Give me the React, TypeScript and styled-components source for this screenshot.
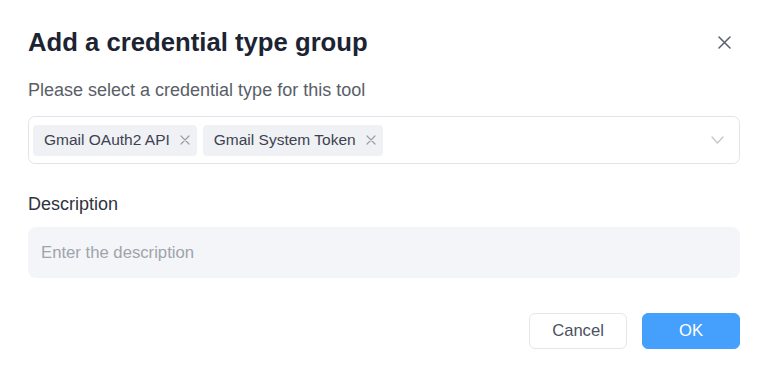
import React from 'react';
import styled, { createGlobalStyle } from 'styled-components';

const GlobalStyle = createGlobalStyle`
  html, body {
    margin: 0;
    padding: 0;
    background: #fff;
    font-family: "Liberation Sans", Arial, sans-serif;
  }
  * {
    box-sizing: border-box;
  }
`;

const Dialog = styled.div`
  width: 768px;
  height: 377px;
  padding: 22px 28px 0 28px;
  background: #fff;
  display: flex;
  flex-direction: column;
`;

const Header = styled.div`
  height: 40px;
  display: flex;
  align-items: center;
  justify-content: space-between;
`;

const Title = styled.h2`
  margin: 0;
  font-size: 25.7px;
  font-weight: 700;
  color: #1c2333;
`;

const CloseButton = styled.button`
  border: none;
  background: none;
  padding: 0;
  margin-right: 9px;
  width: 13px;
  height: 13px;
  display: flex;
  cursor: pointer;
`;

const Label = styled.label<{ $muted?: boolean }>`
  display: block;
  font-size: 18px;
  line-height: 24px;
  color: ${(p) => (p.$muted ? '#595e68' : '#2f3340')};
`;

const SelectBox = styled.div`
  margin-top: 14px;
  height: 48px;
  border: 1px solid #e2e4e9;
  border-radius: 7px;
  padding: 0 15px 0 4px;
  display: flex;
  align-items: center;
  gap: 6px;
`;

const Tag = styled.span`
  height: 31px;
  display: inline-flex;
  align-items: center;
  gap: 10px;
  padding: 0 7px 0 11px;
  border-radius: 4px;
  background: #f0f1f4;
  color: #3d4250;
  font-size: 15.5px;
`;

const Spacer = styled.div`
  flex: 1;
`;

const TextInput = styled.input`
  margin-top: 11px;
  height: 51px;
  width: 100%;
  border: none;
  outline: none;
  border-radius: 8px;
  background: #f4f5f8;
  padding: 0 13px;
  font-family: inherit;
  font-size: 16.7px;
  color: #333;
  &::placeholder {
    color: #a0a3ab;
  }
`;

const Footer = styled.div`
  margin-top: 35px;
  display: flex;
  justify-content: flex-end;
  gap: 15px;
`;

const Button = styled.button<{ $primary?: boolean }>`
  width: 98px;
  height: 36px;
  border-radius: 6px;
  font-family: inherit;
  font-size: 16.6px;
  cursor: pointer;
  border: 1px solid ${(p) => (p.$primary ? '#449ffd' : '#e4e6eb')};
  background: ${(p) => (p.$primary ? '#449ffd' : '#fff')};
  color: ${(p) => (p.$primary ? '#fff' : '#4b5161')};
`;

const SmallX = () => (
  <svg width="10" height="10" viewBox="0 0 10 10">
    <path d="M1 1L9 9M9 1L1 9" stroke="#9a9ea7" strokeWidth="1.2" strokeLinecap="round" />
  </svg>
);

const App: React.FC = () => {
  const tags = ['Gmail OAuth2 API', 'Gmail System Token'];

  return (
    <>
      <GlobalStyle />
      <Dialog>
        <Header>
          <Title>Add a credential type group</Title>
          <CloseButton aria-label="Close">
            <svg width="13" height="13" viewBox="0 0 13 13">
              <path d="M1 1L12 12M12 1L1 12" stroke="#585e6c" strokeWidth="1.5" strokeLinecap="round" />
            </svg>
          </CloseButton>
        </Header>

        <div style={{ marginTop: 16 }}>
          <Label $muted>Please select a credential type for this tool</Label>
        </div>
        <SelectBox>
          {tags.map((t) => (
            <Tag key={t}>
              {t}
              <SmallX />
            </Tag>
          ))}
          <Spacer />
          <svg width="13" height="8" viewBox="0 0 13 8">
            <path d="M1 1L6.5 7L12 1" stroke="#c3c6cd" strokeWidth="1.3" fill="none" strokeLinecap="round" strokeLinejoin="round" />
          </svg>
        </SelectBox>

        <div style={{ marginTop: 28 }}>
          <Label>Description</Label>
        </div>
        <TextInput placeholder="Enter the description" />

        <Footer>
          <Button>Cancel</Button>
          <Button $primary>OK</Button>
        </Footer>
      </Dialog>
    </>
  );
};

export default App;
